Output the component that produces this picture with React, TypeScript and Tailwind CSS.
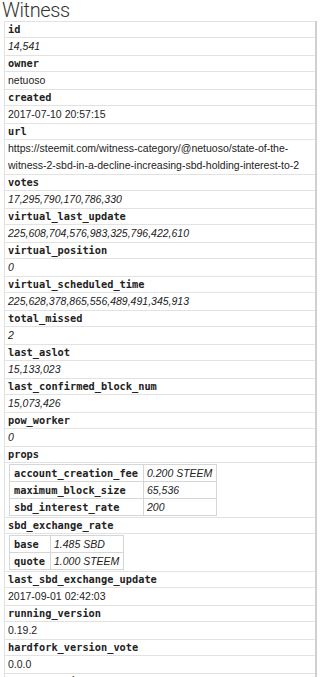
import React from "react"

type Val = string | { rows: [string, string][] }

const rows: { key: string; value: Val; italic?: boolean }[] = [
  { key: "id", value: "14,541", italic: true },
  { key: "owner", value: "netuoso" },
  { key: "created", value: "2017-07-10 20:57:15" },
  {
    key: "url",
    value:
      "https://steemit.com/witness-category/@netuoso/state-of-the-witness-2-sbd-in-a-decline-increasing-sbd-holding-interest-to-2",
  },
  { key: "votes", value: "17,295,790,170,786,330", italic: true },
  { key: "virtual_last_update", value: "225,608,704,576,983,325,796,422,610", italic: true },
  { key: "virtual_position", value: "0", italic: true },
  { key: "virtual_scheduled_time", value: "225,628,378,865,556,489,491,345,913", italic: true },
  { key: "total_missed", value: "2", italic: true },
  { key: "last_aslot", value: "15,133,023", italic: true },
  { key: "last_confirmed_block_num", value: "15,073,426", italic: true },
  { key: "pow_worker", value: "0", italic: true },
  {
    key: "props",
    value: {
      rows: [
        ["account_creation_fee", "0.200 STEEM"],
        ["maximum_block_size", "65,536"],
        ["sbd_interest_rate", "200"],
      ],
    },
  },
  {
    key: "sbd_exchange_rate",
    value: {
      rows: [
        ["base", "1.485 SBD"],
        ["quote", "1.000 STEEM"],
      ],
    },
  },
  { key: "last_sbd_exchange_update", value: "2017-09-01 02:42:03" },
  { key: "running_version", value: "0.19.2" },
  { key: "hardfork_version_vote", value: "0.0.0" },
  { key: "hardfork_time_vote", value: "2016-03-24 16:00:00" },
]

const mono = "font-['DejaVu_Sans_Mono',monospace] font-bold text-[10.3px] text-[#222]"
const sans = "font-['Liberation_Sans',Arial,sans-serif] text-[10.5px] text-[#222]"

function Nested({ data }: { data: [string, string][] }) {
  return (
    <table className="border-collapse ml-[1px]">
      <tbody>
        {data.map(([k, v]) => (
          <tr key={k}>
            <td className={`border border-[#d6d6d6] pl-[4px] pr-[5px] h-[17px] leading-[15px] ${mono}`}>{k}</td>
            <td className={`border border-[#d6d6d6] pl-[3px] pr-[4px] h-[17px] leading-[15px] italic ${sans}`}>{v}</td>
          </tr>
        ))}
      </tbody>
    </table>
  )
}

export default function App() {
  return (
    <div className="bg-white w-[322px] h-[677px] overflow-hidden pl-[4px] pr-[4px]">
      <h1 className="font-['Roboto',sans-serif] font-light text-[20px] leading-[21px] h-[21px] text-[#333] -ml-[2px] tracking-[-0.4px]">
        Witness
      </h1>

      <table className="w-[313px] border-collapse border-r-2 border-r-[#cfcfcf]">
        <tbody>
          {rows.map((row) => (
            <React.Fragment key={row.key}>
              <tr>
                <td className={`border border-[#e2e2e2] pl-[3px] h-[16px] leading-[15px] ${mono}`}>{row.key}</td>
              </tr>
              <tr>
                {typeof row.value === "string" ? (
                  <td
                    className={`border border-[#e2e2e2] pl-[3px] pr-[2px] h-[16px] leading-[17px] ${sans} ${row.italic ? "italic" : ""}`}
                  >
                    {row.value}
                  </td>
                ) : (
                  <td className="border border-[#e2e2e2] pl-[3px] py-[1px]">
                    <Nested data={row.value.rows} />
                  </td>
                )}
              </tr>
            </React.Fragment>
          ))}
        </tbody>
      </table>
    </div>
  )
}
